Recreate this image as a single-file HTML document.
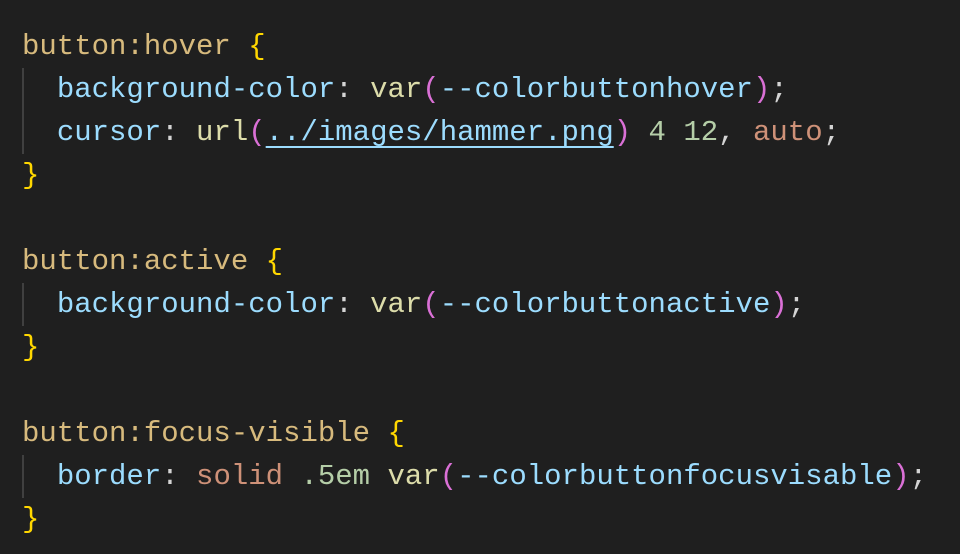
<!DOCTYPE html>
<html><head><style>
html,body{margin:0;background:#1f1f1f;width:960px;height:554px;overflow:hidden}
pre{margin:0;position:absolute;left:22px;top:25px;font-family:"Liberation Mono",monospace;font-size:29px;line-height:43px;color:#d4d4d4;white-space:pre}
.s{color:#d7ba7d}.b{color:#ffd700}.p{color:#9cdcfe}.f{color:#dcdcaa}.q{color:#da70d6}.n{color:#b5cea8}.o{color:#ce9178}
.u{color:#9cdcfe;text-decoration:underline;text-decoration-thickness:2px;text-underline-offset:6px}
.g{position:absolute;left:22px;width:2px;background:#404040}
</style></head><body>
<div class="g" style="top:68px;height:86px"></div>
<div class="g" style="top:283px;height:43px"></div>
<div class="g" style="top:455px;height:43px"></div>
<pre><span class="s">button:hover</span> <span class="b">{</span>
  <span class="p">background-color</span>: <span class="f">var</span><span class="q">(</span><span class="p">--colorbuttonhover</span><span class="q">)</span>;
  <span class="p">cursor</span>: <span class="f">url</span><span class="q">(</span><span class="u">../images/hammer.png</span><span class="q">)</span> <span class="n">4</span> <span class="n">12</span>, <span class="o">auto</span>;
<span class="b">}</span>

<span class="s">button:active</span> <span class="b">{</span>
  <span class="p">background-color</span>: <span class="f">var</span><span class="q">(</span><span class="p">--colorbuttonactive</span><span class="q">)</span>;
<span class="b">}</span>

<span class="s">button:focus-visible</span> <span class="b">{</span>
  <span class="p">border</span>: <span class="o">solid</span> <span class="n">.5em</span> <span class="f">var</span><span class="q">(</span><span class="p">--colorbuttonfocusvisable</span><span class="q">)</span>;
<span class="b">}</span></pre>
</body></html>
